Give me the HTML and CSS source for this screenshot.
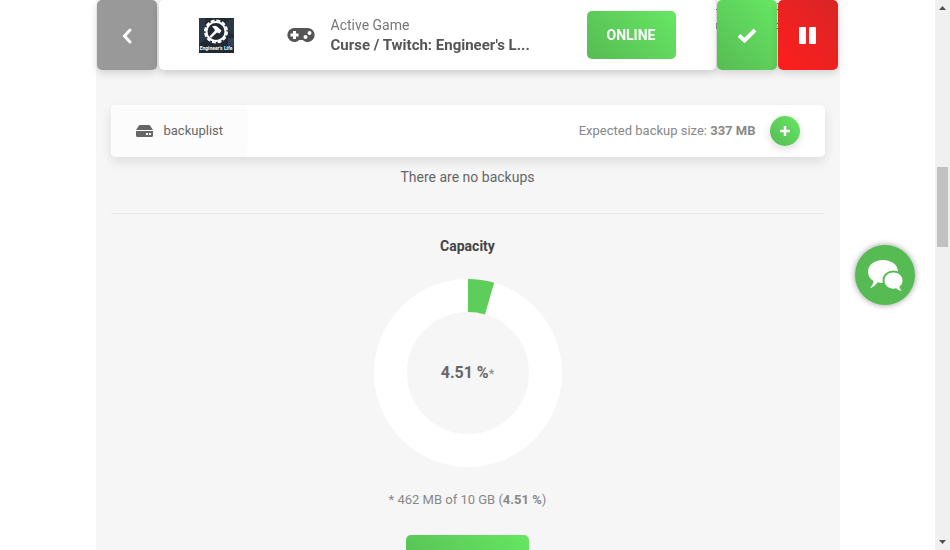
FILE: index.html
```html
<!DOCTYPE html>
<html lang="en">
<head>
  <meta charset="UTF-8">
  <meta name="viewport" content="width=device-width, initial-scale=1.0">
  <title>Backups - Engineer's Life</title>
  <link rel="stylesheet" href="styles.css">
</head>
<body>
  <div class="content">
    <main class="panel">
      <!-- sticky server bar -->
      <header class="topbar">
        <button class="tile tile-back" aria-label="Back">
          <svg width="18" height="20" viewBox="0 0 18 20"><path d="M12 5 6.500 11l5.500 6" fill="none" stroke="#fff" stroke-width="3" stroke-linecap="round"/></svg>
        </button>
        <div class="game">
          <svg class="game-logo" width="35" height="35" viewBox="0 0 35 35" role="img" aria-label="Engineer's Life">
            <rect width="35" height="35" fill="#202934"/>
            <path d="M0 0h6v13l4 6-10 7zM27 4l8-4v17l-7-3z" fill="#2d3845"/>
            <path d="M29 20h6v8h-6z" fill="#344150"/>
            <circle cx="17" cy="13.500" r="11" fill="none" stroke="#fff" stroke-width="2" stroke-dasharray="4 1.760"/>
            <circle cx="17" cy="13.500" r="9.500" fill="none" stroke="#fff" stroke-width="2"/>
            <path d="M13 8.500q3-1.500 5 0l4.500 4-2 3-2.500-1-6 5.500-1.500-1.500 5.500-6-1-2z" fill="#fff"/>
            <text class="logo-text" x="17" y="32" text-anchor="middle">Engineer's Life</text>
          </svg>
          <svg class="gamepad" width="28" height="16" viewBox="0 0 28 16">
            <path fill="#555" fill-rule="evenodd" d="M7.500 1h13a7 7 0 1 1-4.800 12h-3.400A7 7 0 1 1 7.500 1zM6 4v2.500H3.500v3H6V12h3V9.500h2.500v-3H9V4zM18.500 8a2 2 0 1 0 0 4 2 2 0 0 0 0-4zm4-4a2 2 0 1 0 0 4 2 2 0 0 0 0-4z"/>
          </svg>
          <div class="game-info">
            <span class="game-label">Active Game</span>
            <strong class="game-name">Curse / Twitch: Engineer's L...</strong>
          </div>
          <button class="status">ONLINE</button>
        </div>
        <button class="tile tile-ok" aria-label="Running">
          <svg width="20" height="16" viewBox="0 0 20 16"><path d="m2 8.500 5.500 5L18 3" fill="none" stroke="#fff" stroke-width="4"/></svg>
        </button>
        <button class="tile tile-stop" aria-label="Pause">
          <svg width="18" height="18" viewBox="0 0 18 18" fill="#fff"><rect x="0" y="1" width="7" height="17" rx="1"/><rect x="10" y="1" width="7" height="17" rx="1"/></svg>
        </button>
      </header>

      <section class="backups">
        <div class="backup-bar">
          <div class="backup-title">
            <svg width="17" height="12" viewBox="0 0 17 12"><path fill="#666" fill-rule="evenodd" d="M4 0h9q.8 0 1.200.7L17 5H0L2.800.7Q3.200 0 4 0zM0 6h17v4.500q0 1.500-1.500 1.500h-14Q0 12 0 10.500zm10 2v2h2V8zm3 0v2h2V8z"/></svg>
            <span>backuplist</span>
          </div>
          <span class="backup-size">Expected backup size: <b>337 MB</b></span>
          <button class="add" aria-label="Create backup">
            <svg width="12" height="12" viewBox="0 0 12 12"><path d="M6 1v10M1 6h10" stroke="#fff" stroke-width="2.500"/></svg>
          </button>
        </div>
        <p class="empty">There are no backups</p>
      </section>

      <section class="capacity">
        <h2>Capacity</h2>
        <div class="donut">
          <svg width="188" height="188" viewBox="0 0 188 188">
            <circle cx="94" cy="94" r="77.500" fill="none" stroke="#fff" stroke-width="33"/>
            <circle cx="94" cy="94" r="77.500" fill="none" stroke="#5dce5a" stroke-width="33" pathLength="100" stroke-dasharray="4.510 95.490" transform="rotate(-90 94 94)"/>
          </svg>
          <span class="donut-label"><b>4.51 %</b>*</span>
        </div>
        <p class="note">* 462 MB of 10 GB (<b>4.51 %</b>)</p>
        <button class="upgrade" aria-label="Upgrade"></button>
      </section>
    </main>
  </div>

  <div class="scrollbar">
    <svg width="7" height="4" viewBox="0 0 7 4"><path d="M3.500 0 7 4H0z" fill="#505050"/></svg>
    <div class="thumb"></div>
    <svg width="7" height="4" viewBox="0 0 7 4"><path d="M0 0h7L3.500 4z" fill="#505050"/></svg>
  </div>

  <button class="chat" aria-label="Chat">
    <svg width="36" height="32" viewBox="0 0 36 32" fill="#fff">
      <path d="M16 1c8.500 0 15 5 15 11.500S24.500 24 16 24c-2 0-4-.3-5.500-.8C8.500 26 6.500 28.500 3 29c2-2.500 3.500-4.500 3.500-7C3 20 1 16.500 1 12.500 1 6 7.500 1 16 1z"/>
      <path d="M26.500 13.500c5 0 9 3.500 9 8 0 2.500-1 4.500-3 6 0 1.700.8 3 2.500 4.300-2.800 0-4.500-1-5.700-2.500-.8.200-1.800.4-2.800.4-5.200 0-9-3.700-9-8.200s3.800-8 9-8z" stroke="#57bb54" stroke-width="4" paint-order="stroke"/>
    </svg>
  </button>
</body>
</html>
```
FILE: styles.css
```css
* {
  box-sizing: border-box;
}
body {
  margin: 0;
  height: 100vh;
  display: flex;
  overflow: hidden;
  background: #fff;
  color: #666;
  font-family: Roboto, "Noto Sans", sans-serif;
  font-size: 14px;
  line-height: 20px;
}
button {
  border: 0;
  padding: 0;
  font: inherit;
  cursor: pointer;
}
svg {
  display: block;
}
.content {
  flex: 1;
  overflow: hidden;
}
.panel {
  max-width: 744px;
  min-height: 100%;
  margin: 0 auto;
  background: #f6f6f6;
}

/* top bar */
.topbar {
  position: sticky;
  top: 0;
  display: flex;
  gap: 1px;
  height: 70px;
  padding: 0 2px 0 1px;
  /* slivers of the scrolled text between the tiles */
  background:
    linear-gradient(#777, #777) right 62px top 3px / 1px 1px no-repeat,
    linear-gradient(#777, #777) right 62px top 9px / 1px 1px no-repeat,
    linear-gradient(#777, #777) right 62px top 23px / 1px 1px no-repeat,
    linear-gradient(#777, #777) right 62px top 28px / 1px 1px no-repeat,
    linear-gradient(#777, #777) right 123px top 9px / 1px 1px no-repeat,
    linear-gradient(#999, #999) right 123px top 23px / 1px 6px no-repeat;
}
.tile {
  flex: none;
  width: 60px;
  display: flex;
  align-items: center;
  justify-content: center;
  border-radius: 5px;
  box-shadow: 0 3px 8px rgba(0, 0, 0, .15);
}
.tile-back {
  background: #999;
}
.tile-ok {
  background: linear-gradient(45deg, #57bb54, #66e763);
}
.tile-stop {
  background: linear-gradient(45deg, #ff1e1e, #d92525);
}
.game {
  flex: 1;
  min-width: 0;
  display: flex;
  align-items: center;
  margin-left: 1px;
  padding: 0 40px;
  background: #fff;
  border-radius: 5px;
  box-shadow: 0 3px 8px rgba(0, 0, 0, .18);
}
.logo-text {
  fill: #fff;
  font-size: 5px;
  font-weight: bold;
}
.gamepad {
  margin: 0 16px 0 53px;
}
.game-info {
  flex: 1;
  min-width: 0;
  display: flex;
  flex-direction: column;
}
.game-label {
  color: #777;
}
.game-name {
  color: #555;
  font-size: 15px;
  white-space: nowrap;
}
.status {
  width: 89px;
  height: 48px;
  border-radius: 5px;
  background: linear-gradient(45deg, #57bb54, #66e763);
  color: #fff;
  font-weight: bold;
}

/* backup list */
.backups {
  margin: 35px 15px 0;
  border-bottom: 1px solid #e8e8e8;
}
.backup-bar {
  display: flex;
  align-items: center;
  height: 52px;
  padding-right: 25px;
  background: #fff;
  border-radius: 5px;
  box-shadow: 0 5px 12px rgba(0, 0, 0, .1);
  font-size: 13px;
}
.backup-title {
  display: flex;
  align-items: center;
  gap: 11px;
  width: 137px;
  height: 100%;
  padding-left: 25px;
  background: #fcfcfc;
  border-radius: 5px 4px 4px 5px / 5px 20px 20px 5px;
}
.backup-size {
  margin-left: auto;
  color: #888;
}
.add {
  width: 30px;
  height: 30px;
  margin-left: 14px;
  display: flex;
  align-items: center;
  justify-content: center;
  border-radius: 50%;
  background: linear-gradient(45deg, #57bb54, #66e763);
  box-shadow: 0 3px 8px rgba(0, 0, 0, .15);
}
.empty {
  margin: 10px 0 26px;
  text-align: center;
}

/* capacity */
.capacity {
  display: flex;
  flex-direction: column;
  align-items: center;
}
.capacity h2 {
  margin: 22px 0 23px;
  color: #444;
  font-size: 14px;
}
.donut {
  display: grid;
  place-items: center;
}
.donut svg,
.donut-label {
  grid-area: 1 / 1;
}
.donut-label {
  color: #888;
  font-size: 13px;
}
.donut-label b {
  color: #666;
  font-size: 16px;
}
.note {
  margin: 23px 0 25px;
  color: #888;
  font-size: 13px;
}
.upgrade {
  width: 123px;
  height: 48px;
  border-radius: 5px;
  background: linear-gradient(45deg, #57bb54, #66e763);
}

.scrollbar {
  flex: none;
  width: 15px;
  display: flex;
  flex-direction: column;
  align-items: center;
  padding: 6px 0;
  background: #f0f0f0;
}
.thumb {
  width: 11px;
  height: 80px;
  margin: 157px 0 auto;
  background: #c1c1c1;
}

.chat {
  position: fixed;
  top: 50%;
  right: 35px;
  width: 60px;
  height: 60px;
  margin-top: -30px;
  display: flex;
  align-items: center;
  justify-content: center;
  border-radius: 50%;
  background: #57bb54;
  box-shadow: 0 0 6px rgba(0, 0, 0, .4);
}
```
